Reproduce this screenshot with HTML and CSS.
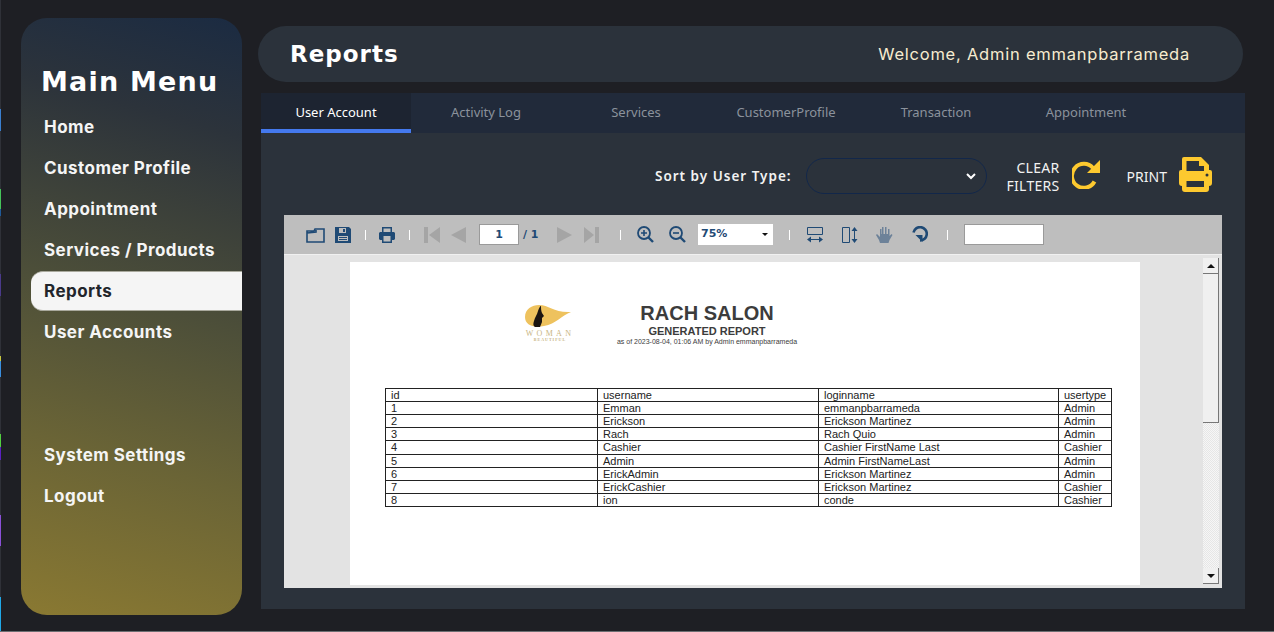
FILE: index.html
```html
<!DOCTYPE html>
<html>
    <head lang="en">
        <meta charset="UTF-8">
        <title>Reports</title>
        <link rel="stylesheet" href="styles.css">
    </head>
    <body>
        <div class="edge"></div>
        <aside class="sidebar">
            <h1 class="menu-title">Main Menu</h1>
            <nav class="menu">
                <a>Home</a>
                <a>Customer Profile</a>
                <a>Appointment</a>
                <a>Services / Products</a>
                <a class="active">Reports</a>
                <a>User Accounts</a>
                <a class="menu-lower">System Settings</a>
                <a>Logout</a>
            </nav>
        </aside>
        <main class="main">
            <header class="top">
                <h2>Reports</h2>
                <span class="welcome">Welcome, Admin emmanpbarrameda</span>
            </header>
            <section class="panel">
                <ul class="tabs">
                    <li class="selected">User Account</li>
                    <li>Activity Log</li>
                    <li>Services</li>
                    <li>CustomerProfile</li>
                    <li>Transaction</li>
                    <li>Appointment</li>
                </ul>
                <div class="filters">
                    <label class="sort-label">Sort by User Type:</label>
                    <div class="sort-select">
                        <svg width="10" height="8" viewBox="0 0 10 8"><path d="M1 2l4 4 4-4" fill="none" stroke="#fff" stroke-width="2"/></svg>
                    </div>
                    <span class="clear-text">CLEAR<br>FILTERS</span>
                    <svg class="clear-icon" width="28" height="29" viewBox="0 0 28 29"><path d="M21 8A12 12 0 1 0 22.500 21.500" fill="none" stroke="#fdc92f" stroke-width="4"/><path d="M28 0v13H15z" fill="#fdc92f"/></svg>
                    <span class="print-text">PRINT</span>
                    <svg class="print-icon" width="33" height="35" viewBox="0 0 33 35"><path fill="#fdc92f" fill-rule="evenodd" d="M5 0h17l8 8v5h1a2 2 0 0 1 2 2v11a3 3 0 0 1-3 3v3a3 3 0 0 1-3 3H6a3 3 0 0 1-3-3v-3a3 3 0 0 1-3-3V15a2 2 0 0 1 2-2h1V2a2 2 0 0 1 2-2zM7.500 4v10H25V9h-5V4zM7.500 24v6H25v-6z"/><circle cx="28" cy="18" r="1.500" fill="#2b323b"/></svg>
                </div>
                <div class="viewer">
                    <div class="toolbar">
                        <svg class="tb-open" width="20" height="16" viewBox="0 0 20 16"><path d="M1 15V4h7l1-2h9v13zM1 6l9-1 0-2" fill="none" stroke="#1f4a75" stroke-width="1.600"/></svg>
                        <svg class="tb-save" width="16" height="16" viewBox="0 0 16 16"><path fill="#1f4a75" fill-rule="evenodd" d="M0 0h14l2 2v14H0zM4 1v5h7V1zM8 2h2v3H8zM3 9v5h10V9z"/><path d="M4 10.500h8M4 12.500h8" stroke="#1f4a75"/></svg>
                        <i class="sep sep-a"></i>
                        <svg class="tb-print" width="16" height="16" viewBox="0 0 16 16"><path fill="#1f4a75" fill-rule="evenodd" d="M3 0h10v5h2l1 1v6l-1 1h-2v3H3v-3H1l-1-1V6l1-1h2zM4.500 1.500V5h7V1.500zM4.500 9v5.500h7V9z"/></svg>
                        <i class="sep sep-a"></i>
                        <svg class="tb-first" width="16" height="16" viewBox="0 0 16 16"><path fill="#a5a5a5" d="M0 0h4v16H0zM16 0v16L5 8z"/></svg>
                        <svg class="tb-prev" width="15" height="16" viewBox="0 0 15 16"><path fill="#a5a5a5" d="M15 0v16L0 8z"/></svg>
                        <input class="tb-page" value="1">
                        <span class="tb-total">/ 1</span>
                        <svg class="tb-next" width="15" height="16" viewBox="0 0 15 16"><path fill="#a5a5a5" d="M0 0v16l15-8z"/></svg>
                        <svg class="tb-last" width="15" height="16" viewBox="0 0 15 16"><path fill="#a5a5a5" d="M0 0v16l10-8zM11 0h4v16h-4z"/></svg>
                        <i class="sep sep-b"></i>
                        <svg class="tb-zoomin" width="17" height="17" viewBox="0 0 17 17"><circle cx="7" cy="7" r="6" fill="none" stroke="#1f4a75" stroke-width="1.800"/><path d="M4 7h6M7 4v6" stroke="#1f4a75" stroke-width="1.600"/><path d="M11.500 11.500l4.500 4.500" stroke="#1f4a75" stroke-width="2.400"/></svg>
                        <svg class="tb-zoomout" width="17" height="17" viewBox="0 0 17 17"><circle cx="7" cy="7" r="6" fill="none" stroke="#1f4a75" stroke-width="1.800"/><path d="M4 7h6" stroke="#1f4a75" stroke-width="1.600"/><path d="M11.500 11.500l4.500 4.500" stroke="#1f4a75" stroke-width="2.400"/></svg>
                        <div class="tb-zoomval">75%<span class="tb-caret"></span></div>
                        <i class="sep sep-c"></i>
                        <svg class="tb-fitw" width="16" height="16" viewBox="0 0 16 16"><path d="M.5.500h15v7H.5z" fill="none" stroke="#1f4a75"/><path d="M0 12.500l4-3v6zM16 12.500l-4-3v6zM4 12h8v1H4z" fill="#1f4a75"/></svg>
                        <svg class="tb-fith" width="16" height="16" viewBox="0 0 16 16"><path d="M.5.500h7v15h-7z" fill="none" stroke="#1f4a75"/><path d="M12.500 0l-3 4h6zM12.500 16l-3-4h6zM12 4h1v8h-1z" fill="#1f4a75"/></svg>
                        <svg class="tb-hand" width="17" height="17" viewBox="0 0 17 17"><path fill="#6d8299" d="M4 17l-1-3-3-5 1-1 3 3V3h1.500v5H6V1h1.500v7H9V1h1.500v7H12V3h1.500v7l2-2 1 1-3 5-1 3z"/></svg>
                        <svg class="tb-rotate" width="16" height="17" viewBox="0 0 16 17"><path d="M1.500 6.500A6.700 6.700 0 1 1 8 14.500" fill="none" stroke="#1f4a75" stroke-width="2.600"/><path d="M3.500 9h7v7z" fill="#1f4a75"/></svg>
                        <i class="sep sep-d"></i>
                        <input class="tb-search">
                    </div>
                    <div class="report-area">
                        <div class="page">
                            <div class="report-head">
                                <div class="logo">
                                    <svg width="48" height="24" viewBox="0 0 48 24"><path fill="#eec25e" d="M0 12C0 4 7 0 14 0c10 0 15 8 32 7-9 3-15 12-27 14C8 23 0 20 0 12z"/><path fill="#1b1512" d="M10 22c-2-1-2-3-1-6 1-4 3-6 4-10 1-3 2-5 3-5 0 2 0 5 1 7l2 3-2 2v4l-2 5z"/></svg>
                                    <div class="logo-name">WOMAN</div>
                                    <div class="logo-sub">BEAUTIFUL</div>
                                </div>
                                <div class="report-title">
                                    <div class="salon">RACH SALON</div>
                                    <div class="generated">GENERATED REPORT</div>
                                    <div class="asof">as of 2023-08-04, 01:06 AM by Admin emmanpbarrameda</div>
                                </div>
                            </div>
                            <table class="report-table">
                                <tr><td>id</td><td>username</td><td>loginname</td><td>usertype</td></tr>
                                <tr><td>1</td><td>Emman</td><td>emmanpbarrameda</td><td>Admin</td></tr>
                                <tr><td>2</td><td>Erickson</td><td>Erickson Martinez</td><td>Admin</td></tr>
                                <tr><td>3</td><td>Rach</td><td>Rach Quio</td><td>Admin</td></tr>
                                <tr><td>4</td><td>Cashier</td><td>Cashier FirstName Last</td><td>Cashier</td></tr>
                                <tr><td>5</td><td>Admin</td><td>Admin FirstNameLast</td><td>Admin</td></tr>
                                <tr><td>6</td><td>ErickAdmin</td><td>Erickson Martinez</td><td>Admin</td></tr>
                                <tr><td>7</td><td>ErickCashier</td><td>Erickson Martinez</td><td>Cashier</td></tr>
                                <tr><td>8</td><td>ion</td><td>conde</td><td>Cashier</td></tr>
                            </table>
                        </div>
                        <div class="scrollbar">
                            <div class="sb-btn"><span class="sb-up"></span></div>
                            <div class="sb-thumb"></div>
                            <div class="sb-track"></div>
                            <div class="sb-btn"><span class="sb-down"></span></div>
                        </div>
                    </div>
                </div>
            </section>
        </main>
    </body>
</html>
```
FILE: styles.css
```css
*{
    margin:0;
    padding:0;
    box-sizing:border-box;
}
ul{
    list-style:none;
}
body{
    width:1274px;
    height:632px;
    overflow:hidden;
    display:flex;
    background-color:#1e1f24;
    border-bottom:1px solid #6c6e72;
    font-family:"Inter","Liberation Sans",sans-serif;
}
/* sliver of the window behind, left edge */
.edge{
    width:1px;
    height:632px;
    flex:none;
    background:linear-gradient(#2f3138 109px,#3a7fd0 109px,#3a7fd0 131px,#2f3138 131px,#2f3138 189px,#45c45a 189px,#45c45a 209px,#1f5a9a 209px,#1f5a9a 216px,#2f3138 216px,#2f3138 274px,#4a3a8a 274px,#4a3a8a 296px,#2f3138 296px,#2f3138 356px,#c8c840 356px,#c8c840 361px,#3a8fe0 361px,#3a8fe0 377px,#2f3138 377px,#2f3138 434px,#52d040 434px,#52d040 447px,#5a20c0 447px,#5a20c0 460px,#2f3138 460px,#2f3138 515px,#8a50d8 515px,#8a50d8 546px,#2f3138 546px,#2f3138 597px,#20a8e8 597px);
}

/* left menu */
.sidebar{
    width:221px;
    height:597px;
    flex:none;
    margin:18px 0 0 20px;
    padding:50px 0 0 10px;
    border-radius:26px;
    background:linear-gradient(196deg,#1b2b42 0%,#2c333b 18%,#4d4f39 48%,#6a6436 72%,#8a7932 100%);
}
.menu-title{
    height:27px;
    margin-left:10px;
    font-family:"DejaVu Sans",sans-serif;
    font-size:27px;
    line-height:27px;
    font-weight:700;
    letter-spacing:1.200px;
    color:#fff;
    white-space:nowrap;
}
.menu{
    display:flex;
    flex-direction:column;
    margin-top:12px;
}
.menu a{
    height:41px;
    padding-left:13px;
    font-size:17px;
    line-height:40px;
    font-weight:700;
    letter-spacing:.45px;
    color:#f5f5f5;
}
.menu .active{
    height:40px;
    margin-bottom:1px;
    border-radius:12px 0 0 12px;
    border-top:1px solid #a9a99d;
    border-bottom:1px solid #a9a99d;
    background-color:#f5f5f5;
    line-height:38px;
    color:#22252b;
}
.menu .menu-lower{
    margin-top:82px;
}

/* right side */
.main{
    width:987px;
    flex:none;
    margin-left:16px;
}
.top{
    height:56px;
    width:985px;
    margin-top:26px;
    padding:0 53px 0 32px;
    display:flex;
    align-items:center;
    justify-content:space-between;
    border-radius:28px;
    background-color:#2b323b;
}
.top h2{
    font-family:"DejaVu Sans",sans-serif;
    font-size:23px;
    font-weight:700;
    letter-spacing:1px;
    color:#fff;
}
.welcome{
    font-size:16.500px;
    letter-spacing:.77px;
    color:#f7ecd0;
}
.panel{
    width:984px;
    height:516px;
    margin:11px 0 0 3px;
    background-color:#2b323b;
}
.tabs{
    display:flex;
    height:40px;
    background-color:#212a3a;
}
.tabs li{
    width:150px;
    height:40px;
    font-family:"Noto Sans",sans-serif;
    font-size:13px;
    line-height:39px;
    text-align:center;
    color:#8b929c;
}
.tabs .selected{
    background-color:#1d2431;
    border-bottom:4px solid #4479ee;
    color:#fff;
}
.filters{
    height:82px;
    display:flex;
    align-items:center;
    padding-top:4px;
    font-family:"Noto Sans",sans-serif;
    color:#f2f2f2;
}
.sort-label{
    margin-left:394px;
    font-size:13.500px;
    font-weight:600;
    letter-spacing:1px;
    white-space:nowrap;
}
.sort-select{
    width:181px;
    height:36px;
    margin-left:14px;
    padding-right:10px;
    display:flex;
    align-items:center;
    justify-content:flex-end;
    border:1px solid #12274a;
    border-radius:18px;
}
.clear-text{
    width:73px;
    text-align:right;
    font-size:14px;
    line-height:18px;
    letter-spacing:.3px;
    margin-top:1px;
}
.clear-icon{
    margin-left:12px;
    margin-bottom:4px;
}
.print-text{
    margin-left:27px;
    font-size:14px;
}
.print-icon{
    margin-left:12px;
    margin-bottom:4px;
}

/* report viewer */
.viewer{
    width:938px;
    height:373px;
    margin-left:23px;
    background-color:#e3e3e3;
}
.toolbar{
    height:40px;
    display:flex;
    align-items:center;
    padding-left:22px;
    border-bottom:1px solid #f0f0f0;
    background-color:#bebebe;
}
.sep{
    width:1px;
    height:10px;
    background-color:#fff;
}
.sep-a{margin-left:14px;}
.sep-b{margin-left:21px;}
.sep-c{margin-left:16px;}
.sep-d{margin-left:19px;}
.tb-save{margin-left:9px;}
.tb-print{margin-left:13px;}
.tb-first{margin-left:14px;}
.tb-prev{margin-left:11px;}
.tb-page{
    width:40px;
    height:21px;
    margin-left:13px;
    border:1px solid #9a9a9a;
    background-color:#fff;
    outline:none;
    text-align:center;
    font-family:"DejaVu Sans",sans-serif;
    font-size:11px;
    font-weight:700;
    color:#1f4a75;
}
.tb-total{
    width:18px;
    margin-left:4px;
    font-family:"DejaVu Sans",sans-serif;
    font-size:11px;
    font-weight:700;
    color:#1f4a75;
}
.tb-next{margin-left:16px;}
.tb-last{margin-left:12px;}
.tb-zoomin{margin-left:16px;}
.tb-zoomout{margin-left:15px;}
.tb-zoomval{
    width:75px;
    height:21px;
    margin-left:12px;
    padding-left:3px;
    position:relative;
    background-color:#fff;
    font-family:"DejaVu Sans",sans-serif;
    font-size:11px;
    font-weight:700;
    line-height:20px;
    color:#1f4a75;
}
.tb-caret{
    position:absolute;
    right:5px;
    top:9px;
    border-left:3px solid transparent;
    border-right:3px solid transparent;
    border-top:3px solid #111;
}
.tb-fitw{margin-left:17px;}
.tb-fith{margin-left:19px;}
.tb-hand{margin-left:18px;}
.tb-rotate{margin-left:19px;}
.tb-search{
    width:80px;
    height:21px;
    margin-left:16px;
    border:1px solid #9a9a9a;
    background-color:#fff;
    outline:none;
}
.report-area{
    height:333px;
    display:flex;
    padding:7px 3px 0 66px;
}
.page{
    width:790px;
    height:323px;
    flex:none;
    padding:37px 0 0 35px;
    background-color:#fff;
    font-family:"Liberation Sans",sans-serif;
}
.report-head{
    display:flex;
    height:89px;
}
.logo{
    width:50px;
    margin-left:140px;
    padding-top:6px;
    text-align:center;
    color:#c9b583;
    font-family:"Liberation Serif",serif;
}
.logo svg{
    display:block;
}
.logo-name{
    margin-top:1px;
    font-size:8px;
    line-height:7px;
    letter-spacing:3.300px;
    white-space:nowrap;
}
.logo-sub{
    margin-top:1px;
    font-size:4px;
    line-height:4px;
    font-weight:700;
    letter-spacing:1px;
    white-space:nowrap;
}
.report-title{
    width:240px;
    margin-left:12px;
    text-align:center;
    color:#3c3c3c;
}
.salon{
    margin-top:3px;
    font-size:20px;
    line-height:23px;
    font-weight:700;
}
.generated{
    font-size:11px;
    line-height:13px;
    font-weight:700;
}
.asof{
    font-size:7px;
    line-height:8px;
    white-space:nowrap;
}
.report-table{
    width:726px;
    height:119px;
    table-layout:fixed;
    border-collapse:collapse;
    font-size:11px;
    color:#222;
}
.report-table td{
    height:13px;
    padding:0 0 0 5px;
    border:1px solid #222;
    line-height:12px;
    white-space:nowrap;
    overflow:hidden;
}
.report-table td:nth-child(1){width:212px;}
.report-table td:nth-child(2){width:221px;}
.report-table td:nth-child(3){width:240px;}
.report-table td:nth-child(4){width:53px;}
.scrollbar{
    width:16px;
    height:326px;
    margin-left:63px;
    margin-top:-4px;
    display:flex;
    flex-direction:column;
}
.sb-btn{
    height:16px;
    flex:none;
    display:flex;
    align-items:center;
    justify-content:center;
    background-color:#f0f0f0;
    border-right:1px solid #777;
    border-bottom:1px solid #777;
}
.sb-up{
    border-left:4px solid transparent;
    border-right:4px solid transparent;
    border-bottom:4px solid #111;
}
.sb-down{
    border-left:4px solid transparent;
    border-right:4px solid transparent;
    border-top:4px solid #111;
}
.sb-thumb{
    height:149px;
    flex:none;
    background-color:#f0f0f0;
    border-right:1px solid #777;
    border-bottom:1px solid #777;
}
.sb-track{
    flex:1;
    background:repeating-conic-gradient(#f6f6f6 0 25%,#e6e6e6 0 50%) 0 0/2px 2px;
}
```
